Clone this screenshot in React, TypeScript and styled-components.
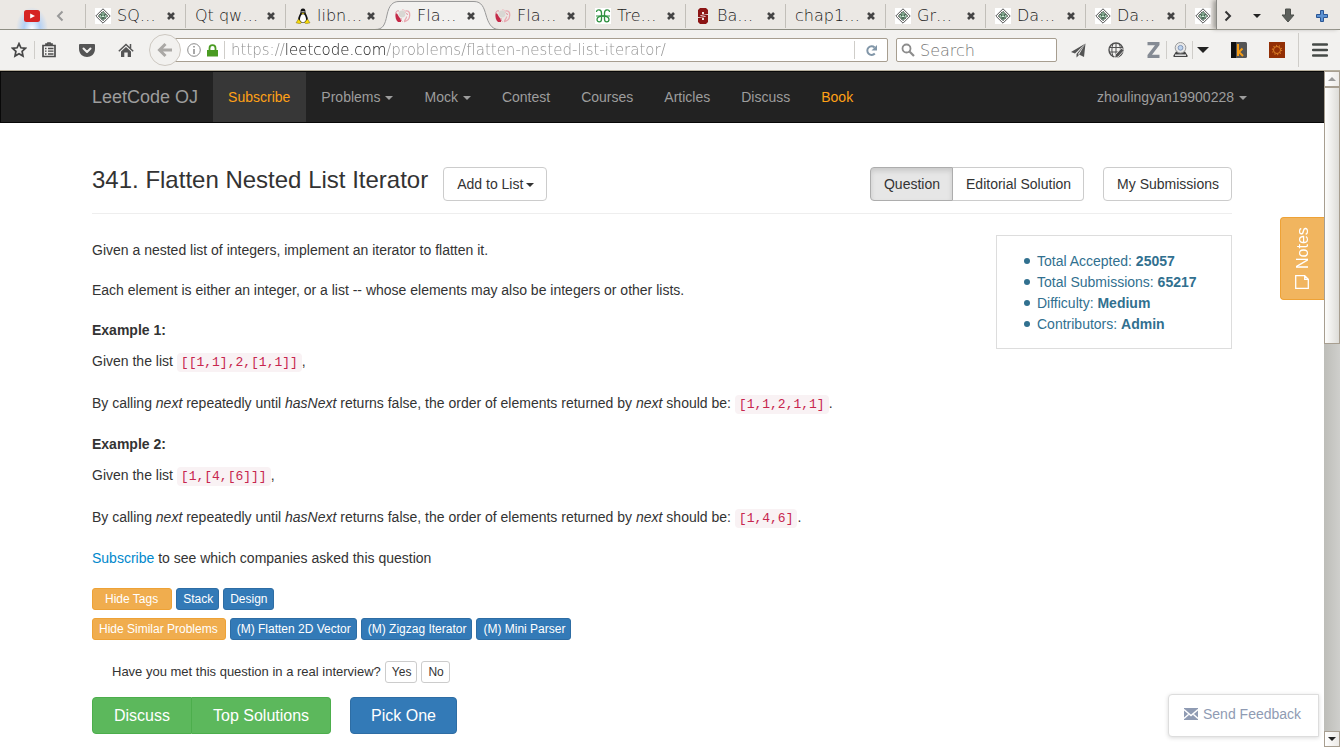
import React from "react";
import styled, { createGlobalStyle, css } from "styled-components";

const GlobalStyle = createGlobalStyle`
  *, *::before, *::after { box-sizing: border-box; }
  body {
    margin: 0;
    background: #fff;
    color: #333;
    font: 14px/20px "Liberation Sans", Arial, sans-serif;
  }
  button, input { font: inherit; color: inherit; }
  button { cursor: pointer; }
  a { text-decoration: none; color: inherit; }
  svg { display: block; flex: none; }
`;

/* ---------- browser window ---------- */

const Window = styled.div`
  display: flex;
  flex-direction: column;
  min-height: 100vh;
`;

const chromeFont = css`
  font-family: "DejaVu Sans Light", "DejaVu Sans", sans-serif;
  font-weight: 200;
  font-size: 16px;
`;

const TabStrip = styled.div`
  ${chromeFont}
  display: flex;
  height: 30px;
  background: #ebe8e4;
  border-bottom: 1px solid #8e8e83;
  color: #1a1a1a;
`;

const PinnedTab = styled.button`
  display: flex;
  align-items: center;
  justify-content: center;
  width: 64px;
  padding: 2px 0 0;
  border: 0;
  background: radial-gradient(ellipse 16px 22px at 50% 100%, #ffffff, #b4d1f5 50%, transparent);
`;

const ScrollTabs = styled.button`
  display: flex;
  align-items: center;
  width: 21px;
  padding: 2px 0 0;
  border: 0;
  background: none;
  margin-left: -8px;
  margin-right: 8px;
`;

const Tabs = styled.div`
  display: flex;
  flex: 1;
  min-width: 0;
  overflow: hidden;
`;

const TabBox = styled.div<{ $active?: boolean; $plain?: boolean }>`
  position: relative;
  display: flex;
  align-items: center;
  flex: none;
  width: 100px;
  height: 30px;
  padding: 2px 9px 0;
  border-left: 1px solid transparent;
  ${(p) =>
    !p.$plain &&
    css`
      border-image: linear-gradient(transparent 5px, #c2bfb9 5px, #c2bfb9 27px, transparent 27px) 1;
    `}
`;

const TabShape = styled.svg`
  position: absolute;
  left: -11px;
  top: 0;
`;

const TabLabel = styled.button`
  position: relative;
  display: flex;
  align-items: center;
  gap: 6px;
  flex: 1;
  min-width: 0;
  padding: 0;
  border: 0;
  background: none;
  white-space: nowrap;
`;

const CloseTab = styled.button`
  position: relative;
  padding: 0;
  border: 0;
  background: none;
`;

const TabTools = styled.div`
  display: flex;
  align-items: center;
  justify-content: space-between;
  width: 124px;
  padding: 2px 12px 0 7px;
  border-left: 1px solid #8a8a86;
  box-shadow: -3px 0 4px #a5a29d;
  background: #ebe8e4;
  position: relative;
`;

const ToolButton = styled.button`
  display: flex;
  align-items: center;
  justify-content: center;
  padding: 0;
  border: 0;
  background: none;
`;

const NavBar = styled.div`
  ${chromeFont}
  display: flex;
  align-items: center;
  height: 41px;
  padding: 0 12px 0 11px;
  background: #f2f1ef;
  border-bottom: 1px solid #b5ae9d;
`;

const Divider = styled.span<{ $tall?: boolean }>`
  flex: none;
  width: 1px;
  height: ${(p) => (p.$tall ? 34 : 18)}px;
  background: #cfcdc9;
`;

const LeftTools = styled.div`
  display: flex;
  align-items: center;
  justify-content: space-between;
  width: 123px;
  margin-right: 15px;
`;

const ToolPair = styled.div<{ $gap?: number }>`
  display: flex;
  align-items: center;
  gap: ${(p) => p.$gap ?? 7}px;
`;

const MenuPair = styled(ToolPair)`
  margin-left: -9px;
`;

const BackButton = styled.button`
  position: relative;
  z-index: 1;
  display: flex;
  align-items: center;
  justify-content: center;
  flex: none;
  width: 32px;
  height: 32px;
  margin-right: -16px;
  padding: 0;
  border: 1px solid #cdc8c1;
  border-radius: 50%;
  background: #f2f1ef;
`;

const Field = styled.div`
  display: flex;
  align-items: center;
  height: 24px;
  background: #fff;
  border: 1px solid #a79e90;
  border-radius: 2px;
`;

const UrlField = styled(Field)`
  flex: 1;
  min-width: 0;
  padding: 0 9px 0 21px;
  gap: 6px;
`;

const UrlInput = styled.input`
  flex: 1;
  min-width: 0;
  height: 22px;
  padding: 0;
  border: 0;
  outline: 0;
  font-size: 15px;
  color: transparent;
  background: linear-gradient(90deg, #8d8d8d 54px, #111 54px, #111 155px, #8d8d8d 155px);
  background-clip: text;
  -webkit-background-clip: text;
`;

const SearchField = styled(Field)`
  width: 161px;
  margin-left: 8px;
  padding: 0 4px;
  gap: 5px;
`;

const SearchInput = styled.input`
  flex: 1;
  min-width: 0;
  height: 22px;
  padding: 0;
  border: 0;
  outline: 0;
  background: none;
  &::placeholder { color: #777; opacity: 1; }
`;

const ReloadButton = styled(ToolButton)`
  margin-left: 4px;
`;

const RightTools = styled.div`
  display: flex;
  align-items: center;
  gap: 22px;
  margin-left: 14px;
`;

/* ---------- viewport and its scroll bar ---------- */

const Viewport = styled.div`
  display: flex;
  flex: 1;
`;

const Page = styled.div`
  position: relative;
  flex: 1;
  min-width: 0;
`;

const ScrollBar = styled.div`
  display: flex;
  flex-direction: column;
  flex: none;
  width: 16px;
  background: linear-gradient(90deg, #bdbdb8, #cfcfcc);
`;

const ScrollArrow = styled.button`
  display: flex;
  align-items: center;
  justify-content: center;
  height: 16px;
  padding: 0;
  border: 1px solid #a79e90;
  background: linear-gradient(90deg, #fff, #eceae7);
`;

const ScrollThumb = styled.div`
  height: 257px;
  margin-bottom: auto;
  border: 1px solid #a79e90;
  background: linear-gradient(90deg, #fdfdfc, #dddcd8);
`;

/* ---------- site ---------- */

const SiteNav = styled.nav`
  background: #222;
  border-top: 1px solid #080808;
  border-bottom: 1px solid #080808;
  box-shadow: inset 1px 0 #080808;
`;

const NavInner = styled.div`
  display: flex;
  align-items: stretch;
  max-width: 1170px;
  height: 50px;
  margin: 0 auto;
  padding-left: 15px;
  color: #9d9d9d;
`;

const Brand = styled.a`
  padding: 15px 15px 15px 0;
  font-size: 18px;
`;

const NavLink = styled.a<{ $active?: boolean; $gold?: boolean }>`
  display: flex;
  align-items: center;
  gap: 5px;
  padding: 0 16px 0 15px;
  ${(p) => p.$gold && "color: #ffa116;"}
  ${(p) => p.$active && "background: #373737;"}
  &:last-child { margin-left: auto; padding-right: 0; }
`;

const Caret = styled.span`
  width: 0;
  height: 0;
  margin-top: 2px;
  border-top: 4px solid;
  border-left: 4px solid transparent;
  border-right: 4px solid transparent;
`;

const Main = styled.main`
  max-width: 1170px;
  margin: 0 auto;
  padding: 44px 15px 13px;
`;

const TitleRow = styled.header`
  display: flex;
  align-items: center;
  padding-bottom: 12px;
  border-bottom: 1px solid #eee;
`;

const Title = styled.h1`
  margin: 0 15px 0 0;
  padding-bottom: 8px;
  font-size: 24px;
  line-height: 26px;
  font-weight: 400;
`;

const Button = styled.button<{ $active?: boolean }>`
  display: flex;
  align-items: center;
  gap: 3px;
  height: 34px;
  padding: 0 12px 0 13px;
  border: 1px solid #ccc;
  border-radius: 4px;
  background: #fff;
  ${(p) =>
    p.$active &&
    css`
      background: #e6e6e6;
      border-color: #adadad;
      box-shadow: inset 0 3px 5px rgba(0, 0, 0, 0.125);
    `}
`;

const Group = styled.div`
  display: flex;
  & > :first-child { border-top-right-radius: 0; border-bottom-right-radius: 0; }
  & > :last-child { border-top-left-radius: 0; border-bottom-left-radius: 0; border-left: 0; }
`;

const ViewButtons = styled.div`
  display: flex;
  gap: 19px;
  margin-left: auto;
`;

const Columns = styled.div`
  display: flex;
  justify-content: space-between;
  align-items: flex-start;
  padding-top: 21px;
`;

const Statement = styled.div`
  padding-top: 5px;
`;

const Para = styled.p<{ $code?: boolean }>`
  margin: 0 0 20px;
  ${(p) => p.$code && "line-height: 22px;"}
`;

const Example = styled.h2`
  margin: 0 0 10px;
  font-size: 14px;
  line-height: 20px;
`;

const Code = styled.code`
  padding: 2px 4px;
  border-radius: 4px;
  background: #f9f2f4;
  color: #c7254e;
  font: 13px/18px "Liberation Mono", monospace;
`;

const LinkText = styled.a`
  color: #0088cc;
`;

const Stats = styled.ul`
  flex: none;
  width: 236px;
  margin: 0;
  padding: 15px 15px 13px 27px;
  border: 1px solid #ddd;
  color: #31708f;
  line-height: 21px;
  list-style: none;
`;

const Stat = styled.li`
  &::before {
    content: "";
    display: inline-block;
    width: 6px;
    height: 6px;
    margin-right: 7px;
    border-radius: 50%;
    background: currentColor;
    vertical-align: 2px;
  }
`;

const TagRow = styled.div`
  display: flex;
  gap: 4px;
  margin-bottom: 8px;
`;

const Small = styled.button<{ $kind: "warning" | "primary" | "plain"; $wide?: boolean }>`
  height: 22px;
  padding: 0 5px 0 6px;
  border: 1px solid;
  border-radius: 3px;
  font-size: 12px;
  line-height: 18px;
  ${(p) => p.$kind === "warning" && "padding: 0 7px 0 6px; background: #f0ad4e; border-color: #eea236; color: #fff;"}
  ${(p) => p.$kind === "primary" && "background: #337ab7; border-color: #2e6da4; color: #fff;"}
  ${(p) => p.$kind === "plain" && "background: #fff; border-color: #ccc;"}
  ${(p) => p.$wide && "padding: 0 13px 0 12px;"}
`;

const Interview = styled.div`
  display: flex;
  align-items: center;
  gap: 4px;
  padding: 13px 20px 14px;
  font-size: 13px;
`;

const Actions = styled.div`
  display: flex;
  gap: 19px;
`;

const Large = styled.button<{ $green?: boolean }>`
  height: 37px;
  padding: 0 ${(p) => (p.$green ? 21 : 20)}px;
  border: 1px solid ${(p) => (p.$green ? "#4cae4c" : "#2e6da4")};
  border-radius: 4px;
  background: ${(p) => (p.$green ? "#5cb85c" : "#337ab7")};
  color: #fff;
  font-size: 16px;
`;

const Notes = styled.button`
  position: absolute;
  right: 0;
  top: 146px;
  display: flex;
  align-items: center;
  gap: 6px;
  width: 44px;
  height: 83px;
  padding: 10px 14px;
  border: 1px solid #eea236;
  border-left: 0;
  border-radius: 0 4px 4px 0;
  background: #f1b55f;
  color: #fff;
  font-size: 16px;
  line-height: 14px;
  writing-mode: vertical-rl;
  transform: rotate(180deg);
`;

const Feedback = styled.button`
  position: absolute;
  right: 5px;
  bottom: 10px;
  display: flex;
  align-items: center;
  gap: 5px;
  min-width: 151px;
  height: 43px;
  padding: 0 15px 3px;
  border: 1px solid #ddd;
  border-radius: 4px 0 0 4px;
  background: #fff;
  box-shadow: 0 1px 4px rgba(0, 0, 0, 0.15);
  color: #8f9bb3;
`;

/* ---------- drawings ---------- */

const Diamond = () => (
  <svg width="16" height="16" viewBox="0 0 16 16">
    <path fill="#fff" d="M0 0h16v16H0z" />
    <path d="M8 .8 15.2 8 8 15.2.8 8z" fill="#fff" stroke="#555" />
    <path d="M8 3.200 12.800 8 8 12.800 3.200 8z" fill="#7ea58c" stroke="#444" strokeDasharray="2 1" />
    <path d="M5.500 6.500l1.500 1M10.500 6.500 9 7.500M6.500 10h3" stroke="#24392c" />
    <path d="M7 8h2v1H7zM5 7.500h1v1H5zM10 7.500h1v1h-1z" fill="#d8eee0" />
  </svg>
);

const Tux = () => (
  <svg width="16" height="16" viewBox="0 0 16 16">
    <path d="M8 .5c-2 0-2.600 1.400-2.400 3.600C5.500 6 3 8.500 3 12l2 2.500h6l2-2.500c0-3.500-2.500-6-2.600-7.900C10.600 1.900 10 .5 8 .5z" fill="#111" />
    <path d="M8 6c-1.600 0-3 3-3 5.500C5 13.500 6.500 14 8 14s3-.5 3-2.500C11 9 9.600 6 8 6z" fill="#fff" />
    <path d="M6.600 3h1v1.500h-1zM8.400 3h1v1.500h-1z" fill="#fff" />
    <path d="M6.500 5h3L8 6.500zM3.500 11 6.500 14.500 5 15.800 1 14.800zM12.500 11 9.500 14.500 11 15.800 15 14.800z" fill="#f5d80a" stroke="#5f5406" strokeWidth=".4" />
  </svg>
);

const LeetIcon = () => (
  <svg width="16" height="16" viewBox="0 0 16 16">
    <path d="M.5 5.500C0 9 1 12.500 3 14h3c.5-2-.5-3.500-1.500-4.500C3 8 2.500 4.500.5 5.500z" fill="#c52a48" />
    <path d="M10.500 3c3-.5 4.500 1 4.200 4.500S13.500 12.800 9.500 13.500c-.5-1.500 2.500-3 2-5" fill="none" stroke="#e8a9b1" strokeWidth="1.300" />
    <path d="M.8 5C1 3 2.500 2.500 4 3M6 10c-.3 1.500.5 3 1.500 3.500M11.500 5l1 2" fill="none" stroke="#e0909c" />
    <circle cx="7" cy="6" r="3.400" fill="#d9d7d3" />
    <path d="M7 1.800c2-.5 3.500 1 3.500 3.200" fill="none" stroke="#ebc3c6" />
  </svg>
);

const Geeks = () => (
  <svg width="16" height="16" viewBox="0 0 16 16">
    <path fill="#fff" d="M0 0h16v16H0z" />
    <g fill="none" stroke="#2f9140" strokeWidth="1.300">
      <path d="M1.500 4C1.500 1 6.500 1 6.500 5v6c0 4-4.500 3.500-4.500.5C2 9 3.500 8.200 8 8" />
      <path d="M14.500 4C14.500 1 9.500 1 9.500 5v6c0 4 4.500 3.500 4.500.5C14 9 12.500 8.200 8 8" />
      <path d="M1 8h14" strokeWidth="1" />
    </g>
  </svg>
);

const Cardinal = () => (
  <svg width="16" height="16" viewBox="0 0 16 16">
    <path d="M5 0h6l2 2v4h-4V4H7v2l6 1v7l-2 2H5l-2-2v-4h4v2h2v-2L3 9V2z" fill="#8c1515" />
    <path d="M8 4.500v2M8 9.500v2M5.500 7.500 10.500 8.500" stroke="#f4dede" strokeWidth="1" fill="none" />
  </svg>
);

const YouTube = () => (
  <svg width="16" height="12" viewBox="0 0 16 12">
    <rect width="16" height="12" rx="2.500" fill="#d62322" />
    <path d="M6.200 3.400v5L11 5.900z" fill="#fff" />
  </svg>
);

const CloseMark = () => (
  <svg width="10" height="10" viewBox="0 0 10 10">
    <path d="M2 2l6 6M8 2 2 8" stroke="#444" strokeWidth="2.600" />
  </svg>
);

const Star = () => (
  <svg width="16" height="16" viewBox="0 0 16 16">
    <path d="M8 1.600l1.900 4.200 4.600.5-3.400 3.100.9 4.600L8 11.700 4 14l.9-4.600L1.500 6.300l4.600-.5z" fill="none" stroke="#474747" strokeWidth="1.700" />
  </svg>
);

const Clipboard = () => (
  <svg width="14" height="16" viewBox="0 0 14 16">
    <path d="M1 3.500h12V14.500H1zM4 3V2h2V1h2v1h2v1" fill="none" stroke="#4d4d4d" strokeWidth="1.700" />
    <path d="M3 6.500h1.500M6 6.500h5.500M3 9.200h1.500M6 9.200h5.500M3 12h1.500M6 12h5.500" stroke="#4d4d4d" strokeWidth="1.300" />
  </svg>
);

const Pocket = () => (
  <svg width="16" height="13" viewBox="0 0 16 13">
    <path d="M1 0h14q1 0 1 1v4c0 5-4 8-8 8S0 10 0 5V1Q0 0 1 0z" fill="#555" />
    <path d="M4.500 4.500 8 8l3.500-3.500" stroke="#f2f1ef" strokeWidth="2" fill="none" strokeLinecap="round" strokeLinejoin="round" />
  </svg>
);

const Home = () => (
  <svg width="16" height="16" viewBox="0 0 16 16">
    <path d="M8 5 13 9.500V15H9.700v-4.500H6.300V15H3V9.500z" fill="#555" />
    <path d="M.8 9.300 8 2.500l7.200 6.800M12.500 2v4" stroke="#555" strokeWidth="1.500" fill="none" />
  </svg>
);

const BackArrow = () => (
  <svg width="16" height="16" viewBox="0 0 16 16">
    <path d="M8.500 2 2.500 8l6 6M3 8h12" stroke="#aaa8a5" strokeWidth="3" fill="none" />
  </svg>
);

const Info = () => (
  <svg width="14" height="14" viewBox="0 0 14 14">
    <circle cx="7" cy="7" r="6.300" fill="none" stroke="#8b8b8b" />
    <path d="M7 6v5M7 3v1.600" stroke="#8b8b8b" strokeWidth="1.500" />
  </svg>
);

const Lock = () => (
  <svg width="11" height="13" viewBox="0 0 11 13">
    <path d="M0 6h11v6.500H0z" fill="#4a9b22" />
    <path d="M2.500 6.500V4.200a3 3 0 0 1 6 0v2.300" fill="none" stroke="#4a9b22" strokeWidth="1.800" />
  </svg>
);

const Reload = () => (
  <svg width="13" height="13" viewBox="0 0 13 13">
    <path d="M9.800 9.500A4.300 4.300 0 1 1 9.600 3.500" fill="none" stroke="#8196a8" strokeWidth="2" />
    <path d="M12 1v5.500H6.500z" fill="#8196a8" />
  </svg>
);

const Magnifier = () => (
  <svg width="14" height="14" viewBox="0 0 14 14">
    <circle cx="5.500" cy="5.500" r="4" fill="none" stroke="#8c8c8c" strokeWidth="1.800" />
    <path d="M8.500 8.500 13 13" stroke="#8c8c8c" strokeWidth="2.200" />
  </svg>
);

const Plane = () => (
  <svg width="15" height="15" viewBox="0 0 15 15">
    <path d="M14.500.5 0 9l4 1.500zM14.500.5 5.500 11v3.500L8 12l-1-1zM14.500.5 13 14 8 11.500z" fill="#555" />
  </svg>
);

const Globe = () => (
  <svg width="17" height="17" viewBox="0 0 17 17">
    <circle cx="8" cy="8" r="7" fill="none" stroke="#505050" strokeWidth="1.400" />
    <path d="M1 5.500h13M1 10h9M8 1v14M5 1.500C3.500 6 3.500 10 5 14.500M11 1.500c1 2 1.500 4 1.300 6" stroke="#505050" fill="none" />
    <path d="M6.500 16l1-3.500L13.500 6 16 8.500 10 15z" fill="#505050" stroke="#f2f1ef" strokeWidth=".8" />
  </svg>
);

const Zed = () => (
  <svg width="13" height="16" viewBox="0 0 13 16">
    <path d="M.5 0h12v3L5 12.700h7.500V16H.5v-3L8 3.300H.5z" fill="#858b94" />
  </svg>
);

const Webcam = () => (
  <svg width="15" height="16" viewBox="0 0 15 16">
    <path d="M3 9.500h9l2.500 4V15H.5v-1.500z" fill="#444" />
    <path d="M2 12.500h11v1.300H2z" fill="#fff" />
    <circle cx="7.500" cy="5.800" r="5.300" fill="#e8e8e8" stroke="#999" />
    <circle cx="7.500" cy="5.800" r="2.400" fill="#bcd3ef" stroke="#8297ba" />
  </svg>
);

const KBadge = () => (
  <svg width="16" height="16" viewBox="0 0 16 16">
    <rect width="16" height="16" rx="1.500" fill="#555" />
    <path d="M0 0h5v16H0z" fill="#111" />
    <path d="M7 2v12M11.500 6.500 8 10l4 4" stroke="#f79d16" strokeWidth="2" fill="none" />
  </svg>
);

const SunBadge = () => (
  <svg width="16" height="16" viewBox="0 0 16 16">
    <path d="M0 0h16v16H0z" fill="#922f05" />
    <circle cx="8" cy="8" r="4.600" fill="none" stroke="#e08327" strokeWidth="1.200" strokeDasharray="1 1.890" />
    <circle cx="8" cy="8" r="3.500" fill="none" stroke="#e08327" strokeWidth="1" />
  </svg>
);

const Menu = () => (
  <svg width="16" height="14" viewBox="0 0 16 14">
    <path d="M1 1.500h14M1 7h14M1 12.500h14" stroke="#454a47" strokeWidth="2.500" strokeLinecap="round" />
  </svg>
);

const Triangle = ({ size = 8, color = "#222", up = false }: { size?: number; color?: string; up?: boolean }) => (
  <svg width={size} height={size / 2} viewBox="0 0 8 4">
    <path d={up ? "M0 4h8L4 0z" : "M0 0h8L4 4z"} fill={color} />
  </svg>
);

const Chevron = ({ left = false, color = "#333" }: { left?: boolean; color?: string }) => (
  <svg width="8" height="12" viewBox="0 0 8 12">
    <path d={left ? "M6.500 1.500 2 6l4.500 4.500" : "M1.500 1.500 6 6l-4.500 4.500"} stroke={color} strokeWidth="2" fill="none" />
  </svg>
);

const DownArrow = () => (
  <svg width="14" height="15" viewBox="0 0 14 15">
    <path d="M4.500 1h5v6H13L7 14 1 7h3.500z" fill="#5d605c" stroke="#4d504c" />
  </svg>
);

const Plus = () => (
  <svg width="12" height="12" viewBox="0 0 12 12">
    <path d="M4.500.5h3v4h4v3h-4v4h-3v-4h-4v-3h4z" fill="#5d92d2" stroke="#2a5594" />
  </svg>
);

const Envelope = () => (
  <svg width="14" height="12" viewBox="0 0 14 12">
    <path d="M0 0h14v12H0z" fill="#8f9bb3" />
    <path d="M0 1.500 7 7.500l7-6M0 10.500l4.500-4M14 10.500l-4.500-4" stroke="#fff" strokeWidth="1.400" fill="none" />
  </svg>
);

const NotePage = () => (
  <svg width="14" height="14" viewBox="0 0 14 14">
    <path d="M.7.700h12.600v12.600H4.300L.7 9.700zM4.300 13.300V9.700H.7" fill="none" stroke="#fff" strokeWidth="1.300" />
  </svg>
);

/* ---------- content ---------- */

type TabData = { title: string; icon?: React.ReactNode; active?: boolean; plain?: boolean };

const tabs: TabData[] = [
  { title: "SQ…", icon: <Diamond /> },
  { title: "Qt qw…" },
  { title: "libn…", icon: <Tux /> },
  { title: "Fla…", icon: <LeetIcon />, active: true, plain: true },
  { title: "Fla…", icon: <LeetIcon />, plain: true },
  { title: "Tre…", icon: <Geeks /> },
  { title: "Ba…", icon: <Cardinal /> },
  { title: "chap1…" },
  { title: "Gr…", icon: <Diamond /> },
  { title: "Da…", icon: <Diamond /> },
  { title: "Da…", icon: <Diamond /> },
  { title: "", icon: <Diamond /> },
];

const menu = [
  { text: "Subscribe", gold: true, active: true },
  { text: "Problems", caret: true },
  { text: "Mock", caret: true },
  { text: "Contest" },
  { text: "Courses" },
  { text: "Articles" },
  { text: "Discuss" },
  { text: "Book", gold: true },
];

const stats = [
  ["Total Accepted", "25057"],
  ["Total Submissions", "65217"],
  ["Difficulty", "Medium"],
  ["Contributors", "Admin"],
];

const Result = ({ value }: { value: string }) => (
  <Para $code>
    By calling <em>next</em> repeatedly until <em>hasNext</em> returns false, the order of elements returned by{" "}
    <em>next</em> should be: <Code>{value}</Code>.
  </Para>
);

export default function App() {
  return (
    <Window>
      <GlobalStyle />
      <TabStrip>
        <PinnedTab aria-label="Pinned tab"><YouTube /></PinnedTab>
        <ScrollTabs aria-label="Scroll tabs left"><Chevron left color="#999" /></ScrollTabs>
        <Tabs>
          {tabs.map((t, i) => (
            <TabBox key={i} $active={t.active} $plain={t.plain}>
              {t.active && (
                <TabShape width="124" height="30" viewBox="0 0 124 30">
                  <path d="M0 29.500C8 29.500 10 25 12 15S18 1.500 24 1.500H99C107 1.500 109 8 111 15S116 29.500 124 29.500V30H0z" fill="#f2f1ef" />
                  <path d="M0 29.500C8 29.500 10 25 12 15S18 1.500 24 1.500H99C107 1.500 109 8 111 15S116 29.500 124 29.500" fill="none" stroke="#999" />
                </TabShape>
              )}
              <TabLabel aria-label={t.title ? undefined : "Tab"}>{t.icon}{t.title}</TabLabel>
              {t.title && <CloseTab aria-label="Close tab"><CloseMark /></CloseTab>}
            </TabBox>
          ))}
        </Tabs>
        <TabTools>
          <ToolButton aria-label="Scroll tabs right"><Chevron /></ToolButton>
          <ToolButton aria-label="List all tabs"><Triangle /></ToolButton>
          <ToolButton aria-label="Downloads"><DownArrow /></ToolButton>
          <ToolButton aria-label="New tab"><Plus /></ToolButton>
        </TabTools>
      </TabStrip>
      <NavBar>
        <LeftTools>
          <ToolPair>
            <ToolButton aria-label="Bookmark"><Star /></ToolButton>
            <Divider />
            <ToolButton aria-label="Bookmarks list"><Clipboard /></ToolButton>
          </ToolPair>
          <ToolButton aria-label="Pocket"><Pocket /></ToolButton>
          <ToolButton aria-label="Home"><Home /></ToolButton>
        </LeftTools>
        <BackButton aria-label="Back"><BackArrow /></BackButton>
        <UrlField>
          <Info />
          <Lock />
          <Divider />
          <UrlInput aria-label="Address" defaultValue="https://leetcode.com/problems/flatten-nested-list-iterator/" />
          <Divider />
          <ReloadButton aria-label="Reload"><Reload /></ReloadButton>
        </UrlField>
        <SearchField>
          <Magnifier />
          <SearchInput aria-label="Search" placeholder="Search" />
        </SearchField>
        <RightTools>
          <ToolButton aria-label="Send page"><Plane /></ToolButton>
          <ToolButton aria-label="Web editor"><Globe /></ToolButton>
          <ToolPair $gap={6}>
            <ToolButton aria-label="Zotero"><Zed /></ToolButton>
            <Divider />
            <ToolPair $gap={4}>
              <ToolButton aria-label="Capture"><Webcam /></ToolButton>
              <Divider />
              <ToolButton aria-label="Capture options"><Triangle size={12} /></ToolButton>
            </ToolPair>
          </ToolPair>
          <ToolButton aria-label="K extension"><KBadge /></ToolButton>
          <ToolButton aria-label="Sun extension"><SunBadge /></ToolButton>
          <MenuPair $gap={13}>
            <Divider $tall />
            <ToolButton aria-label="Open menu"><Menu /></ToolButton>
          </MenuPair>
        </RightTools>
      </NavBar>

      <Viewport>
        <Page>
          <SiteNav>
            <NavInner>
              <Brand href="#">LeetCode OJ</Brand>
              {menu.map((m) => (
                <NavLink key={m.text} href="#" $gold={m.gold} $active={m.active}>
                  {m.text}
                  {m.caret && <Caret />}
                </NavLink>
              ))}
              <NavLink href="#">zhoulingyan19900228 <Caret /></NavLink>
            </NavInner>
          </SiteNav>

          <Main>
            <TitleRow>
              <Title>341. Flatten Nested List Iterator</Title>
              <Button>Add to List <Caret /></Button>
              <ViewButtons>
                <Group>
                  <Button $active>Question</Button>
                  <Button>Editorial Solution</Button>
                </Group>
                <Button>My Submissions</Button>
              </ViewButtons>
            </TitleRow>

            <Columns>
              <Statement>
                <Para>Given a nested list of integers, implement an iterator to flatten it.</Para>
                <Para>Each element is either an integer, or a list -- whose elements may also be integers or other lists.</Para>
                <Example>Example 1:</Example>
                <Para $code>Given the list <Code>[[1,1],2,[1,1]]</Code>,</Para>
                <Result value="[1,1,2,1,1]" />
                <Example>Example 2:</Example>
                <Para $code>Given the list <Code>[1,[4,[6]]]</Code>,</Para>
                <Result value="[1,4,6]" />
                <Para><LinkText href="#">Subscribe</LinkText> to see which companies asked this question</Para>
              </Statement>
              <Stats>
                {stats.map(([name, value]) => (
                  <Stat key={name}>{name}: <strong>{value}</strong></Stat>
                ))}
              </Stats>
            </Columns>

            <TagRow>
              <Small $kind="warning" $wide>Hide Tags</Small>
              <Small $kind="primary">Stack</Small>
              <Small $kind="primary">Design</Small>
            </TagRow>
            <TagRow>
              <Small $kind="warning">Hide Similar Problems</Small>
              <Small $kind="primary">(M) Flatten 2D Vector</Small>
              <Small $kind="primary">(M) Zigzag Iterator</Small>
              <Small $kind="primary">(M) Mini Parser</Small>
            </TagRow>
            <Interview>
              Have you met this question in a real interview?
              <Small $kind="plain">Yes</Small>
              <Small $kind="plain">No</Small>
            </Interview>
            <Actions>
              <Group>
                <Large $green>Discuss</Large>
                <Large $green>Top Solutions</Large>
              </Group>
              <Large>Pick One</Large>
            </Actions>
          </Main>

          <Notes><NotePage /><span>Notes</span></Notes>
          <Feedback><Envelope />Send Feedback</Feedback>
        </Page>
        <ScrollBar aria-hidden="true">
          <ScrollArrow tabIndex={-1}><Triangle color="#999" up /></ScrollArrow>
          <ScrollThumb />
          <ScrollArrow tabIndex={-1}><Triangle /></ScrollArrow>
        </ScrollBar>
      </Viewport>
    </Window>
  );
}
